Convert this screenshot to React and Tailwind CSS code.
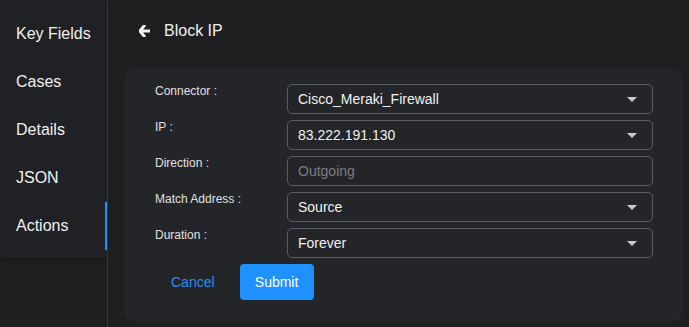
const NAV = ['Key Fields', 'Cases', 'Details', 'JSON', 'Actions'];

const FIELDS = [
  { label: 'Connector :', value: 'Cisco_Meraki_Firewall', select: true },
  { label: 'IP :', value: '83.222.191.130', select: true },
  { label: 'Direction :', value: 'Outgoing', placeholder: true },
  { label: 'Match Address :', value: 'Source', select: true },
  { label: 'Duration :', value: 'Forever', select: true },
];

function Caret() {
  return (
    <svg width="10" height="5" viewBox="0 0 10 5" className="shrink-0">
      <path d="M0 0h10L5 5z" fill="#c8c9cb" />
    </svg>
  );
}

export default function App() {
  return (
    <div className="flex h-[327px] w-[689px] overflow-hidden bg-[#1e1f21] font-['Liberation_Sans',Arial,sans-serif] text-white">
      {/* Sidebar */}
      <aside className="w-[108px] shrink-0 border-r border-[#3a3b3e]">
        <nav className="bg-[#202124] pt-[10px] pb-[8px] shadow-[0_2px_4px_rgba(0,0,0,0.25)]">
          {NAV.map((item) => (
            <div
              key={item}
              className={`flex h-12 items-center pl-4 text-base text-[#f0f0f0] ${
                item === 'Actions' ? 'border-r-2 border-[#1e90ff]' : ''
              }`}
            >
              {item}
            </div>
          ))}
        </nav>
      </aside>

      {/* Main */}
      <main className="flex flex-1 flex-col">
        <div className="flex h-[69px] items-center gap-[14px] pl-[31px] pb-[7px]">
          <svg width="11" height="12" viewBox="0 0 11 12">
            <path d="M5.2 0.8 1 6l4.2 5.2M1.8 6H10.5" stroke="#f4f4f4" strokeWidth="3" fill="none" strokeLinejoin="round" strokeLinecap="round" />
          </svg>
          <span className="text-base text-[#f0f0f0]">Block IP</span>
        </div>

        <section className="mb-[5px] ml-4 mr-[6px] flex-1 rounded-xl bg-[#242528] pl-[31px] pt-[15px]">
          <div className="flex flex-col gap-[6px]">
            {FIELDS.map((f) => (
              <div key={f.label} className="flex items-start">
                <div className="w-[132px] text-xs leading-[14px] text-[#e0e0e0]">{f.label}</div>
                <div className="flex h-[30px] w-[366px] items-center justify-between rounded-[5px] border border-[#5c5d60] pl-[10px] pr-[15px]">
                  <span className={`text-sm ${f.placeholder ? 'text-[#7b7c7f]' : 'text-[#f0f0f0]'}`}>{f.value}</span>
                  {f.select && <Caret />}
                </div>
              </div>
            ))}
          </div>

          <div className="mt-[6px] flex items-center gap-[9px]">
            <button className="h-9 px-4 text-sm text-[#2d8cf0]">Cancel</button>
            <button className="h-9 w-[74px] rounded bg-[#1e90ff] text-sm text-white">Submit</button>
          </div>
        </section>
      </main>
    </div>
  );
}
